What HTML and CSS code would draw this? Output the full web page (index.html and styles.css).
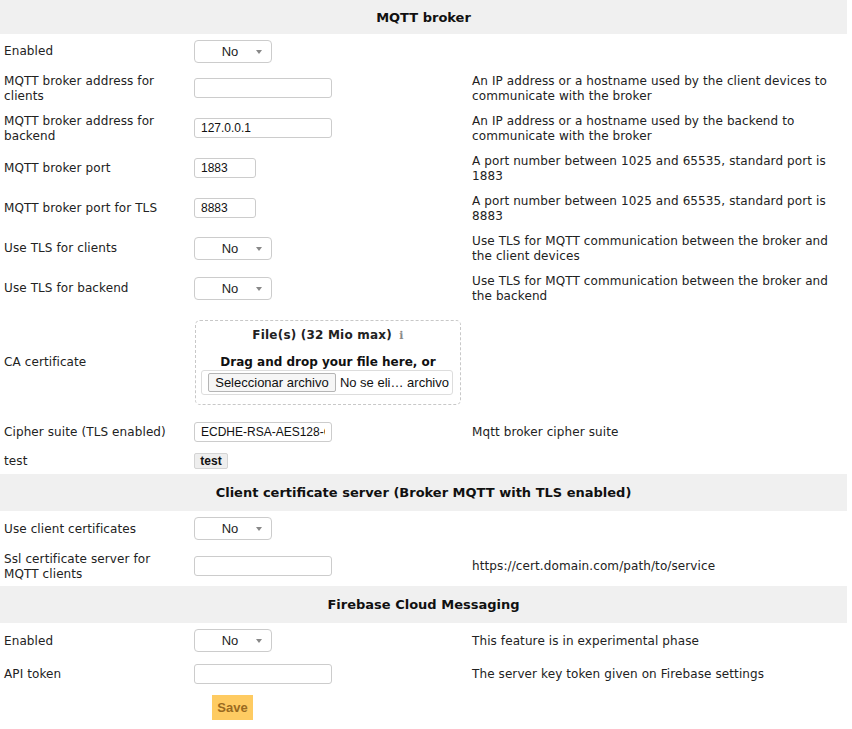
FILE: index.html
```html
<!DOCTYPE html>
<html>
<head>
<meta charset="utf-8">
<title>MQTT broker</title>
<link rel="stylesheet" href="styles.css">
</head>
<body>
<table class="form">
  <colgroup><col class="c-label"><col class="c-value"><col class="c-desc"></colgroup>
  <tr class="head h34"><th colspan="3">MQTT broker</th></tr>
  <tr class="h34"><td class="label">Enabled</td><td><span class="sel-wrap"><select class="sel"><option>No</option></select></span></td><td></td></tr>
  <tr class="h40"><td class="label">MQTT broker address for clients</td><td><input class="txt wide" type="text"></td><td class="desc">An IP address or a hostname used by the client devices to communicate with the broker</td></tr>
  <tr class="h40"><td class="label">MQTT broker address for backend</td><td><input class="txt wide" type="text" value="127.0.0.1"></td><td class="desc">An IP address or a hostname used by the backend to communicate with the broker</td></tr>
  <tr class="h40"><td class="label">MQTT broker port</td><td><input class="txt short" type="text" value="1883"></td><td class="desc">A port number between 1025 and 65535, standard port is 1883</td></tr>
  <tr class="h40"><td class="label">MQTT broker port for TLS</td><td><input class="txt short" type="text" value="8883"></td><td class="desc">A port number between 1025 and 65535, standard port is 8883</td></tr>
  <tr class="h40"><td class="label">Use TLS for clients</td><td><span class="sel-wrap"><select class="sel"><option>No</option></select></span></td><td class="desc">Use TLS for MQTT communication between the broker and the client devices</td></tr>
  <tr class="h40"><td class="label">Use TLS for backend</td><td><span class="sel-wrap"><select class="sel"><option>No</option></select></span></td><td class="desc">Use TLS for MQTT communication between the broker and the backend</td></tr>
  <tr class="h108"><td class="label">CA certificate</td><td>
    <div class="drop">
      <div class="drop-title">File(s) (32 Mio max) <span class="info">ℹ</span></div>
      <div class="drop-text">Drag and drop your file here, or</div>
      <div class="file-group"><span class="file-btn">Seleccionar archivo</span><span class="file-name">No se eli… archivo</span></div>
    </div>
  </td><td></td></tr>
  <tr class="h32"><td class="label">Cipher suite (TLS enabled)</td><td><input class="txt wide" type="text" value="ECDHE-RSA-AES128-GCM-SHA256"></td><td class="desc">Mqtt broker cipher suite</td></tr>
  <tr class="h26"><td class="label">test</td><td><button class="btn-test" type="button">test</button></td><td></td></tr>
  <tr class="head h37"><th colspan="3">Client certificate server (Broker MQTT with TLS enabled)</th></tr>
  <tr class="h35"><td class="label">Use client certificates</td><td><span class="sel-wrap"><select class="sel"><option>No</option></select></span></td><td></td></tr>
  <tr class="h40"><td class="label">Ssl certificate server for MQTT clients</td><td><input class="txt wide" type="text"></td><td class="desc">https://cert.domain.com/path/to/service</td></tr>
  <tr class="head h37"><th colspan="3">Firebase Cloud Messaging</th></tr>
  <tr class="h35"><td class="label">Enabled</td><td><span class="sel-wrap"><select class="sel"><option>No</option></select></span></td><td class="desc">This feature is in experimental phase</td></tr>
  <tr class="h32"><td class="label">API token</td><td><input class="txt wide" type="text"></td><td class="desc">The server key token given on Firebase settings</td></tr>
  <tr class="h34"><td></td><td><button class="btn-save" type="button">Save</button></td><td></td></tr>
</table>
</body>
</html>
```

FILE: styles.css
```css
html, body {
  margin: 0;
  padding: 0;
  background: #fff;
}
body {
  font-family: "DejaVu Sans", Verdana, sans-serif;
  font-size: 12px;
  color: #222;
}
.form {
  width: 847px;
  border-collapse: collapse;
  table-layout: fixed;
}
.c-label { width: 190px; }
.c-value { width: 278px; }
.form td {
  padding: 0 4px;
  vertical-align: middle;
  line-height: 15px;
}
.form td.label {
  padding: 1px 8px 0 4px;
  letter-spacing: 0.1px;
}
.form td.desc {
  padding: 1px 10px 0 4px;
  letter-spacing: 0.1px;
}
.head th {
  background: #f0f0f0;
  font-size: 13px;
  font-weight: bold;
  text-align: center;
  color: #111;
  padding: 0;
}
.h26 { height: 26px; }
.h32 { height: 32px; }
.h34 { height: 34px; }
.h35 { height: 35px; }
.h37 { height: 37px; }
.h40 { height: 40px; }
.h108 { height: 108px; }

.sel-wrap {
  position: relative;
  display: inline-block;
  vertical-align: middle;
}
.sel-wrap::after {
  content: "";
  position: absolute;
  left: 62px;
  top: 10px;
  border-left: 3.5px solid transparent;
  border-right: 3.5px solid transparent;
  border-top: 4px solid #888;
  pointer-events: none;
}
.sel {
  -webkit-appearance: none;
  appearance: none;
  box-sizing: border-box;
  width: 78px;
  height: 23px;
  margin: 0;
  padding: 0 14px 0 8px;
  border: 1px solid #ccc;
  border-radius: 4px;
  background: #fff;
  font-family: "Liberation Sans", Arial, sans-serif;
  font-size: 13px;
  color: #222;
  text-align: center;
  text-align-last: center;
  display: block;
}
.txt {
  box-sizing: border-box;
  height: 20px;
  margin: 0;
  padding: 0 6px;
  border: 1px solid #ccc;
  border-radius: 3px;
  background: #fff;
  font-family: "Liberation Sans", Arial, sans-serif;
  font-size: 12px;
  color: #111;
  display: block;
}
.txt.wide { width: 138px; }
.txt.short { width: 62px; }

.drop {
  box-sizing: border-box;
  width: 266px;
  height: 85px;
  margin-left: 1px;
  border: 1px dashed #c8c8c8;
  border-radius: 5px;
  text-align: center;
  padding-top: 6px;
}
.drop-title {
  font-weight: bold;
  font-size: 12px;
  letter-spacing: 0.2px;
  line-height: 16px;
  color: #222;
}
.info {
  color: #888;
  font-size: 11px;
  font-weight: bold;
  margin-left: 3px;
}
.drop-text {
  font-weight: bold;
  font-size: 12px;
  line-height: 16px;
  margin-top: 10px;
  color: #111;
}
.file-group {
  box-sizing: border-box;
  display: flex;
  align-items: center;
  width: 252px;
  height: 25px;
  margin: 0 0 0 5px;
  padding: 0 3px 0 6px;
  border: 1px solid #ddd;
  border-radius: 3px;
  font-family: "Liberation Sans", Arial, sans-serif;
  font-size: 13px;
  color: #111;
}
.file-btn {
  box-sizing: border-box;
  width: 129px;
  height: 19px;
  line-height: 17px;
  border: 1px solid #b5b5b5;
  border-radius: 2px;
  background: #f6f6f6;
  text-align: center;
}
.file-name {
  margin-left: 4px;
  white-space: nowrap;
}
.btn-test {
  box-sizing: border-box;
  width: 34px;
  height: 16px;
  margin: 0;
  padding: 0;
  border: 1px solid #d4d4d4;
  border-radius: 2px;
  background: #eee;
  font-family: "Liberation Sans", Arial, sans-serif;
  font-size: 12px;
  font-weight: bold;
  color: #111;
  line-height: 14px;
  display: block;
}
.btn-save {
  box-sizing: border-box;
  width: 41px;
  height: 25px;
  margin: 0 0 0 18px;
  padding: 0;
  border: none;
  background: #fecb62;
  font-family: "Liberation Sans", Arial, sans-serif;
  font-size: 13px;
  font-weight: bold;
  color: #9a6a20;
  display: block;
}
```
